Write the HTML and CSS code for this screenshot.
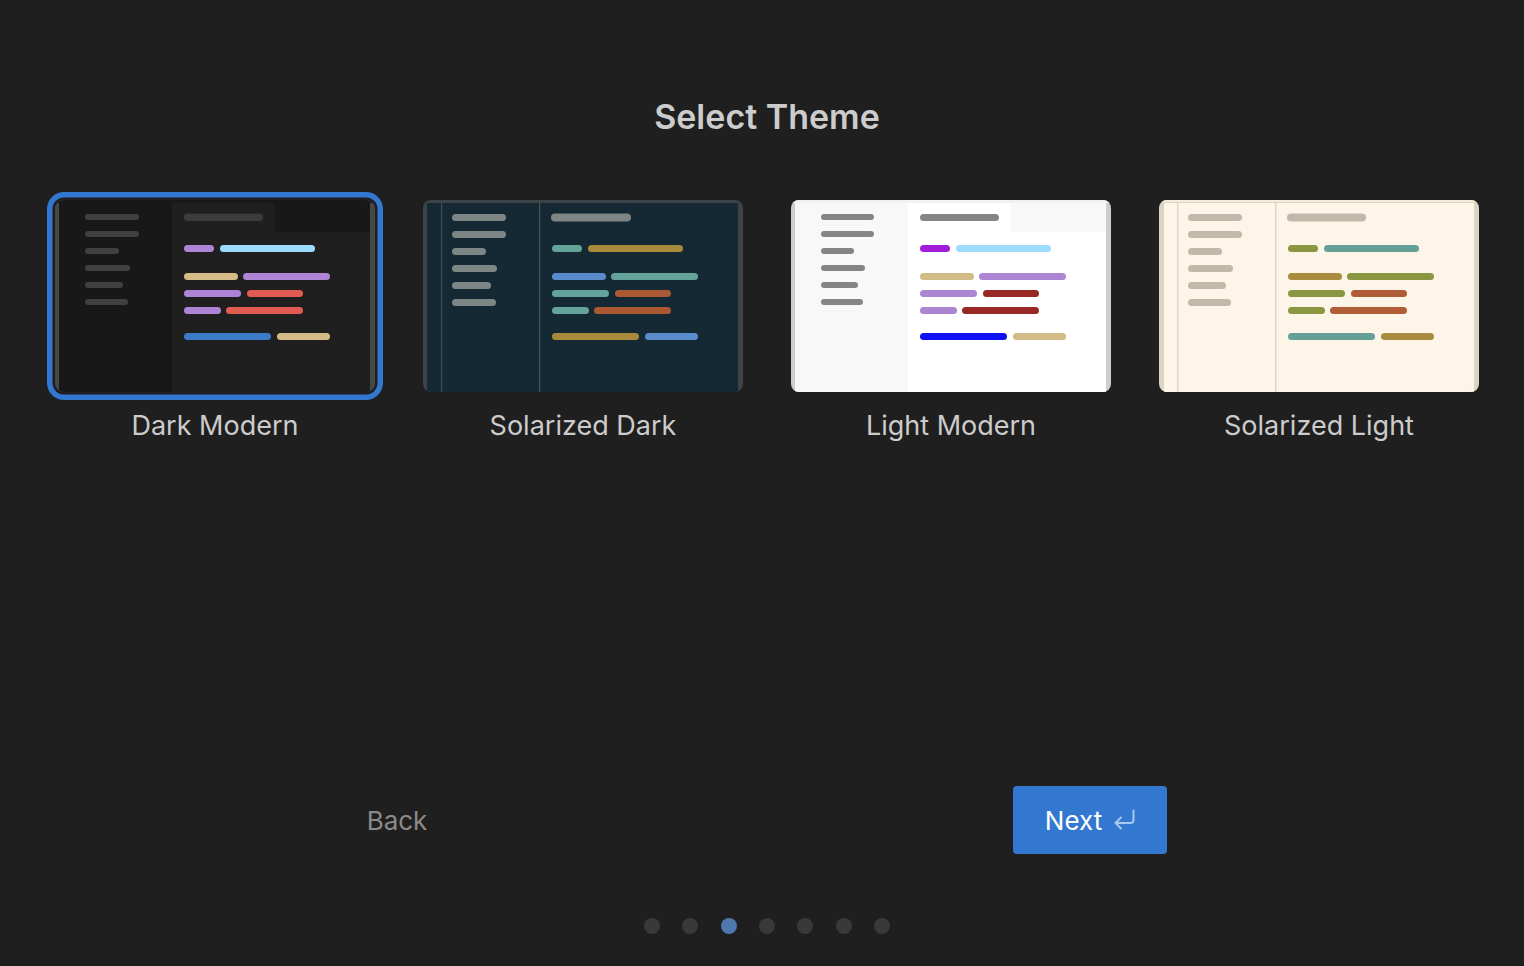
FILE: index.html
```html
<!DOCTYPE html>
<html lang="en">
<head>
<meta charset="utf-8">
<title>Select Theme</title>
<link rel="stylesheet" href="styles.css">
</head>
<body>
<div class="page">
  <h1 class="title">Select Theme</h1>

  <div class="themes">
    <div class="theme selected">
      <div class="preview">
        <svg viewBox="0 0 320 192" width="320" height="192">
          <rect width="320" height="192" fill="#474747"/>
          <rect width="320" height="3" fill="#181818"/>
          <rect x="4" y="3" width="311" height="189" fill="#181818"/>
          <rect x="117" y="3" width="198" height="189" fill="#1f1f1f"/>
          <rect x="220" y="3" width="95" height="29" fill="#181818"/>
          <g fill="#404040">
            <rect x="30" y="14" width="54" height="6" rx="3"/>
            <rect x="30" y="31" width="54" height="6" rx="3"/>
            <rect x="30" y="48" width="34" height="6" rx="3"/>
            <rect x="30" y="65" width="45" height="6" rx="3"/>
            <rect x="30" y="82" width="38" height="6" rx="3"/>
            <rect x="30" y="99" width="43" height="6" rx="3"/>
          </g>
          <rect x="129" y="13.5" width="79" height="7.5" rx="3.75" fill="#3b3b3b"/>
          <rect x="129" y="45" width="30" height="7" rx="3.5" fill="#ad84d6"/>
          <rect x="165" y="45" width="95" height="7" rx="3.5" fill="#9cdcfe"/>
          <rect x="129" y="73" width="54" height="7" rx="3.5" fill="#d5bc87"/>
          <rect x="188" y="73" width="87" height="7" rx="3.5" fill="#ad84d6"/>
          <rect x="129" y="90" width="57" height="7" rx="3.5" fill="#ad84d6"/>
          <rect x="192" y="90" width="56" height="7" rx="3.5" fill="#e25b52"/>
          <rect x="129" y="107" width="37" height="7" rx="3.5" fill="#ad84d6"/>
          <rect x="171" y="107" width="77" height="7" rx="3.5" fill="#e25b52"/>
          <rect x="129" y="133" width="87" height="7" rx="3.5" fill="#3b7bca"/>
          <rect x="222" y="133" width="53" height="7" rx="3.5" fill="#d5bc87"/>
        </svg>
      </div>
      <div class="label">Dark Modern</div>
    </div>

    <div class="theme">
      <div class="preview">
        <svg viewBox="0 0 320 192" width="320" height="192">
          <rect width="320" height="192" fill="#3c4448"/>
          <rect x="4" y="3" width="311" height="189" fill="#142934"/>
          <rect x="18" y="3" width="1.2" height="189" fill="#3f4e55"/>
          <rect x="116" y="3" width="1.2" height="189" fill="#46545a"/>
          <g fill="#7e8585">
            <rect x="29" y="14" width="54" height="7" rx="3.5"/>
            <rect x="29" y="31" width="54" height="7" rx="3.5"/>
            <rect x="29" y="48" width="34" height="7" rx="3.5"/>
            <rect x="29" y="65" width="45" height="7" rx="3.5"/>
            <rect x="29" y="82" width="39" height="7" rx="3.5"/>
            <rect x="29" y="99" width="44" height="7" rx="3.5"/>
          </g>
          <rect x="128" y="13.5" width="80" height="8" rx="4" fill="#7e8585"/>
          <rect x="129" y="45" width="30" height="7" rx="3.5" fill="#64a39a"/>
          <rect x="165" y="45" width="95" height="7" rx="3.5" fill="#a78b3b"/>
          <rect x="129" y="73" width="54" height="7" rx="3.5" fill="#5a8bcc"/>
          <rect x="188" y="73" width="87" height="7" rx="3.5" fill="#64a39a"/>
          <rect x="129" y="90" width="57" height="7" rx="3.5" fill="#64a39a"/>
          <rect x="192" y="90" width="56" height="7" rx="3.5" fill="#ab5834"/>
          <rect x="129" y="107" width="37" height="7" rx="3.5" fill="#64a39a"/>
          <rect x="171" y="107" width="77" height="7" rx="3.5" fill="#ab5834"/>
          <rect x="129" y="133" width="87" height="7" rx="3.5" fill="#a78b3b"/>
          <rect x="222" y="133" width="53" height="7" rx="3.5" fill="#5a8bcc"/>
        </svg>
      </div>
      <div class="label">Solarized Dark</div>
    </div>

    <div class="theme">
      <div class="preview">
        <svg viewBox="0 0 320 192" width="320" height="192">
          <rect width="320" height="192" fill="#cdcdcd"/>
          <rect width="320" height="3" fill="#f2f2f2"/>
          <rect x="4" y="3" width="311" height="189" fill="#f8f8f8"/>
          <rect x="117" y="3" width="198" height="189" fill="#ffffff"/>
          <rect x="220" y="3" width="95" height="29" fill="#f8f8f8"/>
          <g fill="#858585">
            <rect x="30" y="14" width="53" height="6" rx="3"/>
            <rect x="30" y="31" width="53" height="6" rx="3"/>
            <rect x="30" y="48" width="33" height="6" rx="3"/>
            <rect x="30" y="65" width="44" height="6" rx="3"/>
            <rect x="30" y="82" width="37" height="6" rx="3"/>
            <rect x="30" y="99" width="42" height="6" rx="3"/>
          </g>
          <rect x="129" y="14" width="79" height="7" rx="3.5" fill="#858585"/>
          <rect x="129" y="45" width="30" height="7" rx="3.5" fill="#a21ed6"/>
          <rect x="165" y="45" width="95" height="7" rx="3.5" fill="#9cdcfe"/>
          <rect x="129" y="73" width="54" height="7" rx="3.5" fill="#d3bb86"/>
          <rect x="188" y="73" width="87" height="7" rx="3.5" fill="#ab85d2"/>
          <rect x="129" y="90" width="57" height="7" rx="3.5" fill="#ab85d2"/>
          <rect x="192" y="90" width="56" height="7" rx="3.5" fill="#982823"/>
          <rect x="129" y="107" width="37" height="7" rx="3.5" fill="#ab85d2"/>
          <rect x="171" y="107" width="77" height="7" rx="3.5" fill="#982823"/>
          <rect x="129" y="133" width="87" height="7" rx="3.5" fill="#1010f5"/>
          <rect x="222" y="133" width="53" height="7" rx="3.5" fill="#d3bb86"/>
        </svg>
      </div>
      <div class="label">Light Modern</div>
    </div>

    <div class="theme">
      <div class="preview">
        <svg viewBox="0 0 320 192" width="320" height="192">
          <rect width="320" height="192" fill="#dcd5c3"/>
          <rect width="320" height="2" fill="#f3ecdb"/>
          <rect x="5" y="3" width="310" height="189" fill="#fcf5e8"/>
          <rect x="18" y="3" width="1.5" height="189" fill="#dcd5c3"/>
          <rect x="116" y="3" width="1.5" height="189" fill="#dcd5c3"/>
          <g fill="#c1b9a9">
            <rect x="29" y="14" width="54" height="7" rx="3.5"/>
            <rect x="29" y="31" width="54" height="7" rx="3.5"/>
            <rect x="29" y="48" width="34" height="7" rx="3.5"/>
            <rect x="29" y="65" width="45" height="7" rx="3.5"/>
            <rect x="29" y="82" width="38" height="7" rx="3.5"/>
            <rect x="29" y="99" width="43" height="7" rx="3.5"/>
          </g>
          <rect x="128" y="13.5" width="79" height="8" rx="4" fill="#c1b9a9"/>
          <rect x="129" y="45" width="30" height="7" rx="3.5" fill="#8a9640"/>
          <rect x="165" y="45" width="95" height="7" rx="3.5" fill="#65a098"/>
          <rect x="129" y="73" width="54" height="7" rx="3.5" fill="#a98c3f"/>
          <rect x="188" y="73" width="87" height="7" rx="3.5" fill="#8a9640"/>
          <rect x="129" y="90" width="57" height="7" rx="3.5" fill="#8a9640"/>
          <rect x="192" y="90" width="56" height="7" rx="3.5" fill="#b05c36"/>
          <rect x="129" y="107" width="37" height="7" rx="3.5" fill="#8a9640"/>
          <rect x="171" y="107" width="77" height="7" rx="3.5" fill="#b05c36"/>
          <rect x="129" y="133" width="87" height="7" rx="3.5" fill="#65a098"/>
          <rect x="222" y="133" width="53" height="7" rx="3.5" fill="#a98c3f"/>
        </svg>
      </div>
      <div class="label">Solarized Light</div>
    </div>
  </div>

  <div class="footer">
    <button class="btn back">Back</button>
    <button class="btn next">Next
      <svg class="enter" viewBox="0 0 22 22" width="22" height="22">
        <path d="M20.5 2.5V12a3 3 0 0 1-3 3H2.5M8 9.5 2.5 15 8 20.5" fill="none" stroke="#a9c7ee" stroke-width="2" stroke-linecap="round" stroke-linejoin="round"/>
      </svg>
    </button>
  </div>

  <div class="dots">
    <span class="dot"></span>
    <span class="dot"></span>
    <span class="dot active"></span>
    <span class="dot"></span>
    <span class="dot"></span>
    <span class="dot"></span>
    <span class="dot"></span>
  </div>
</div>
</body>
</html>
```

FILE: styles.css
```css
html, body {
  margin: 0;
  padding: 0;
  background: #1f1f1f;
}

body {
  font-family: Inter, "Noto Sans", "Liberation Sans", sans-serif;
  color: #cccccc;
  width: 1524px;
  height: 966px;
  overflow: hidden;
}

.page {
  padding-left: 10px;
  display: flex;
  flex-direction: column;
  align-items: center;
}

.title {
  margin: 95px 0 0;
  height: 44px;
  line-height: 44px;
  font-size: 34px;
  font-weight: 600;
  color: #cccccc;
  letter-spacing: 0;
}

.themes {
  margin-top: 61px;
  display: flex;
  gap: 48px;
}

.theme {
  width: 320px;
  display: flex;
  flex-direction: column;
  align-items: center;
}

.preview {
  width: 320px;
  height: 192px;
  border-radius: 8px;
  overflow: hidden;
}

.preview svg {
  display: block;
}

.theme.selected .preview {
  box-shadow: 0 0 0 2.5px #1f1f1f, 0 0 0 8px #3277d0;
  border-radius: 9px;
}

.label {
  margin-top: 18px;
  height: 32px;
  line-height: 32px;
  font-size: 27px;
  color: #cccccc;
}

.footer {
  margin-top: 344px;
  width: 1514px;
  display: flex;
  align-items: center;
}

.btn {
  height: 68px;
  width: 154px;
  border: none;
  border-radius: 4px;
  font-family: inherit;
  font-size: 26px;
  display: flex;
  align-items: center;
  justify-content: center;
  gap: 11px;
  padding: 0;
}

.back {
  margin-left: 310px;
  background: transparent;
  color: #8a8a8a;
}

.next {
  margin-left: 539px;
  background: #3277d0;
  color: #ffffff;
}

.enter {
  display: block;
  margin-top: -2px;
}

.dots {
  margin-top: 64px;
  display: flex;
  gap: 22.3px;
}

.dot {
  width: 16px;
  height: 16px;
  border-radius: 50%;
  background: #393939;
}

.dot.active {
  background: #4e78ae;
}
```
